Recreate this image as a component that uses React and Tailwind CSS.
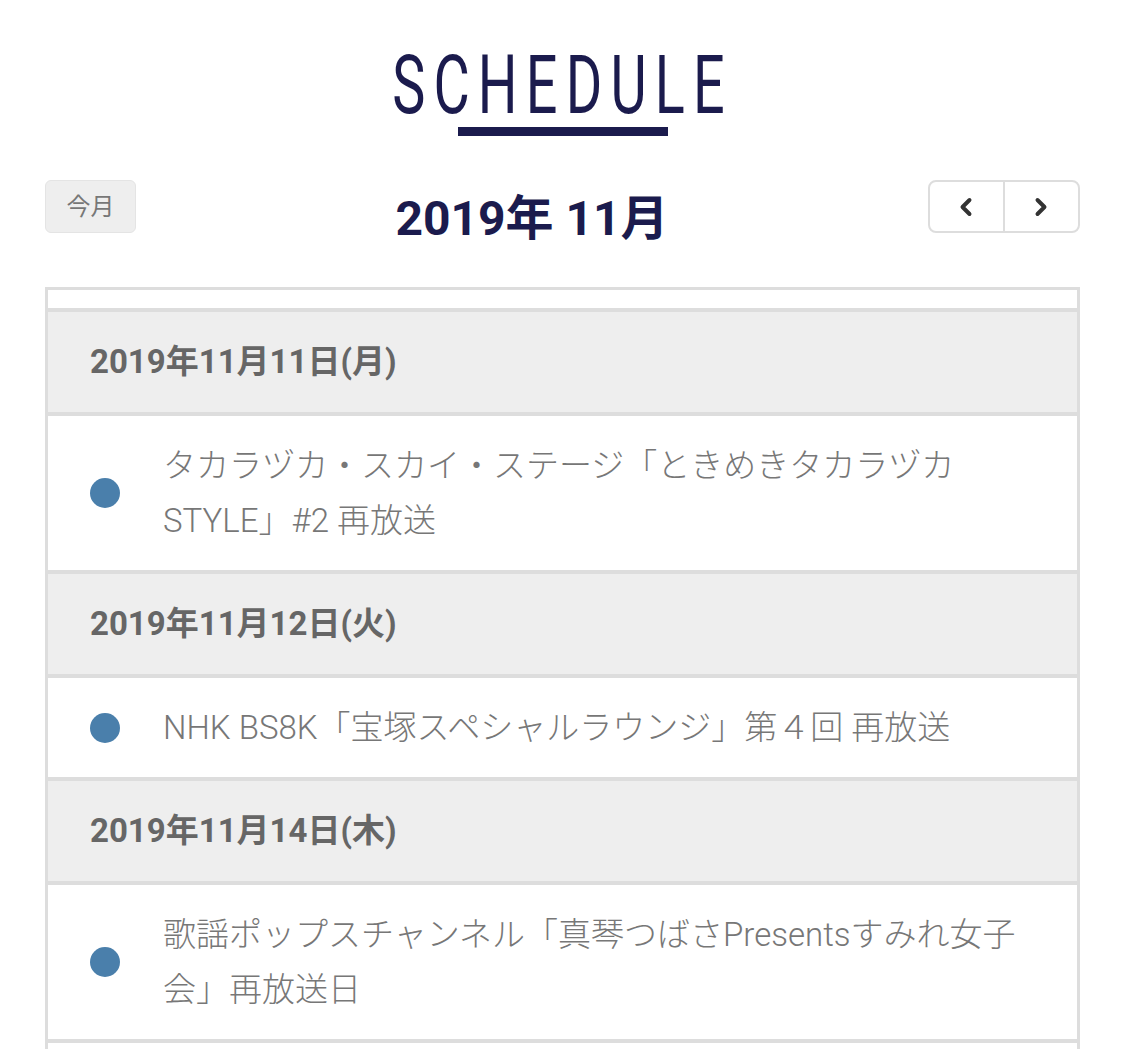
import { ChevronLeft, ChevronRight } from 'lucide-react';

const days = [
  {
    date: '2019年11月11日(月)',
    events: ['タカラヅカ・スカイ・ステージ「ときめきタカラヅカSTYLE」#2 再放送'],
  },
  {
    date: '2019年11月12日(火)',
    events: ['NHK BS8K「宝塚スペシャルラウンジ」第４回 再放送'],
  },
  {
    date: '2019年11月14日(木)',
    events: ['歌謡ポップスチャンネル「真琴つばさPresentsすみれ女子会」再放送日'],
  },
];

function DayBlock({ day }) {
  return (
    <>
      <div className="border-t-4 border-[#dddddd] bg-[#eeeeee] py-[30px] pl-[42px] text-[33px] font-bold leading-[40px] text-[#666666]">
        {day.date}
      </div>
      {day.events.map((ev) => (
        <div key={ev} className="flex items-center border-t-4 border-[#dddddd] bg-white py-[22px] pl-[42px] pr-[47px]">
          <span className="h-[30px] w-[30px] shrink-0 rounded-full bg-[#4a7fab]" />
          <p className="ml-[43px] flex-1 text-[33px] font-light leading-[55px] text-[#777777]">{ev}</p>
        </div>
      ))}
    </>
  );
}

export default function App() {
  return (
    <div className="min-h-screen bg-white font-['Roboto','Noto_Sans_CJK_JP',sans-serif]">
      <div className="flex flex-col items-center pt-[43px]">
        <h1 className="inline-block scale-x-[0.68] text-[82px] font-normal leading-[84px] tracking-[12px] text-[#1b1b4d]">
          SCHEDULE
        </h1>
        <div className="h-[9px] w-[210px] bg-[#1b1b4d]" />
      </div>

      <div className="mx-[45px] mt-[44px] flex items-start justify-between">
        <button className="h-[53px] w-[91px] rounded-md border border-[#e4e4e4] bg-[#eeeeee] text-[24px] text-[#777777]">
          今月
        </button>
        <h2 className="mt-[15px] text-[48px] font-bold leading-none text-[#1b1b4d]">2019年 11月</h2>
        <div className="flex h-[53px] w-[152px] overflow-hidden rounded-lg border-2 border-[#dddddd]">
          <button className="flex flex-1 items-center justify-center border-r-2 border-[#dddddd] text-[#333333]">
            <ChevronLeft size={28} strokeWidth={3.4} />
          </button>
          <button className="flex flex-1 items-center justify-center text-[#333333]">
            <ChevronRight size={28} strokeWidth={3.4} />
          </button>
        </div>
      </div>

      <div className="mx-[45px] mt-[44px] border-x-[3px] border-t-[3px] border-[#dddddd]">
        <div className="h-[18px]" />
        {days.map((d) => (
          <DayBlock key={d.date} day={d} />
        ))}
        <div className="h-[10px] border-t-4 border-[#dddddd]" />
      </div>
    </div>
  );
}
